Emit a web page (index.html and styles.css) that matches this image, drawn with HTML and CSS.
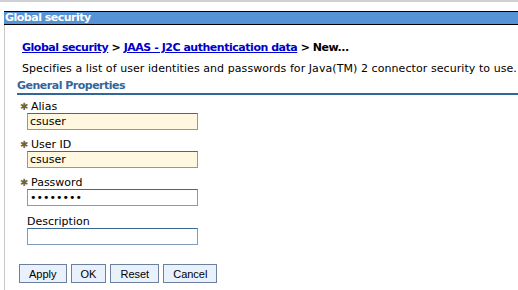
FILE: index.html
```html
<!DOCTYPE html>
<html lang="en">
  <head>
    <meta charset="UTF-8" />
    <title>Global security</title>
    <link rel="stylesheet" href="styles.css">
  </head>
  <body>
    <div class="topline"></div>
    <div class="titlebar">Global security</div>
    <div class="panel">
      <div class="breadcrumb">
        <a href="#">Global security</a> &gt;
        <a href="#">JAAS - J2C authentication data</a> &gt; New...
      </div>
      <p class="intro">Specifies a list of user identities and passwords for Java(TM) 2 connector security to use.</p>
      <h2 class="section">General Properties</h2>

      <div class="field">
        <label><span class="req">&#10033;</span>Alias</label>
        <input class="required" type="text" value="csuser">
      </div>
      <div class="field">
        <label><span class="req">&#10033;</span>User ID</label>
        <input class="required" type="text" value="csuser">
      </div>
      <div class="field">
        <label><span class="req">&#10033;</span>Password</label>
        <input type="password" value="xxxxxxxx">
      </div>
      <div class="field desc">
        <label class="plain">Description</label>
        <input type="text" value="">
      </div>

      <div class="buttons">
        <button>Apply</button>
        <button>OK</button>
        <button>Reset</button>
        <button>Cancel</button>
      </div>
    </div>
  </body>
</html>
```

FILE: styles.css
```css
body {
  margin: 0;
  font-family: "DejaVu Sans", Verdana, sans-serif;
  font-size: 11px;
  color: #000;
  background: #fff;
  overflow: hidden;
}
.topline {
  height: 2px;
  background: #d0d0d0;
  margin-bottom: 9px;
}
.titlebar {
  margin-left: 4px;
  height: 12px;
  line-height: 12px;
  padding-left: 1px;
  background: #5593d6;
  border-top: 1px solid #000;
  border-bottom: 1px solid #000;
  color: #fff;
  font-weight: bold;
  letter-spacing: -0.5px;
  white-space: nowrap;
}
.panel {
  margin-left: 4px;
  border-left: 1px solid #c8c8c8;
  padding: 16px 0 20px 0;
}
.breadcrumb {
  padding-left: 17px;
  line-height: 14px;
  font-weight: bold;
  letter-spacing: -0.47px;
  white-space: nowrap;
}
.breadcrumb a {
  color: #0000cc;
}
.intro {
  margin: 7px 0 0 0;
  padding-left: 17px;
  line-height: 14px;
  letter-spacing: 0.07px;
  white-space: nowrap;
}
.section {
  margin: 3px 0 0 12px;
  font-size: 11px;
  line-height: 13px;
  color: #336699;
  letter-spacing: -0.5px;
  border-bottom: 2px solid #336699;
  padding-bottom: 1px;
}
.field {
  display: flex;
  flex-direction: column;
  align-items: flex-start;
  padding-left: 15px;
  margin-top: 1px;
}
.field + .field {
  margin-top: 4px;
}
.field.desc {
  margin-top: 5px;
}
.field label {
  line-height: 15px;
  height: 15px;
  padding-top: 3px;
  color: #000;
}
.field label.plain {
  padding-left: 7px;
}
.req {
  color: #76661c;
  font-size: 10px;
  font-weight: bold;
  display: inline-block;
  width: 11px;
}
.field input {
  margin: -1px 0 0 7px;
  width: 165px;
  height: 13px;
  padding: 1px 2px;
  border: 1px solid #7f9db9;
  border-top-color: #3c6a98;
  font-family: "DejaVu Sans", Verdana, sans-serif;
  font-size: 11px;
  background: #fff;
  color: #000;
  outline: none;
}
.field input.required {
  background: #fff7df;
}
.buttons {
  display: flex;
  gap: 4px;
  margin: 19px 0 0 14px;
}
.buttons button {
  height: 19px;
  padding: 0 9px;
  font-family: "Liberation Sans", Arial, sans-serif;
  font-size: 11px;
  background: #e9f1fd;
  border: 1px solid #6c7f9c;
  color: #000;
}
```
